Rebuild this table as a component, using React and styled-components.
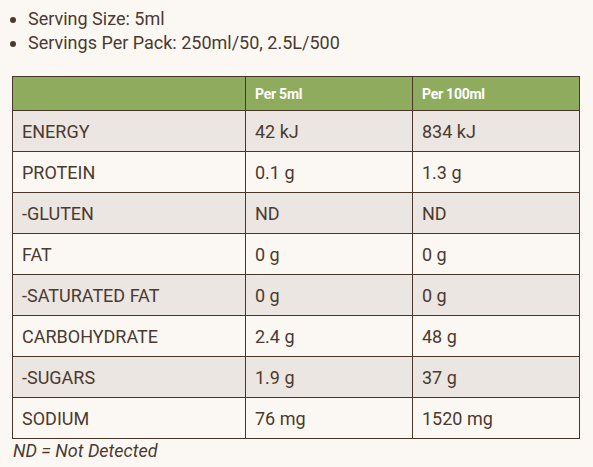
import React from "react";
import styled, { createGlobalStyle } from "styled-components";

const Global = createGlobalStyle`
  html, body { margin: 0; padding: 0; background: #fbf8f4; }
  body { font-family: Roboto, "Liberation Sans", sans-serif; color: #4b3a30; }
`;

const Page = styled.div`
  padding: 7px 14px 0 12px;
`;

const List = styled.ul`
  margin: 0;
  padding-left: 16px;
  font-size: 18px;
  line-height: 24px;
`;

const Table = styled.table`
  margin-top: 21px;
  width: 567px;
  border-collapse: collapse;
  table-layout: fixed;
`;

const Head = styled.th`
  background: #8fab5d;
  color: #ffffff;
  font-size: 14px;
  font-weight: 700;
  letter-spacing: -0.25px;
  text-align: left;
  height: 33px;
  padding: 0 9px;
  border: 1px solid #4a3628;
`;

const Row = styled.tr`
  background: ${(p) => (p.$alt ? "#ebe6e1" : "#fbf8f4")};
`;

const Cell = styled.td`
  font-size: 18px;
  height: 41px;
  padding: 0 9px;
  border: 1px solid #4a3628;
  box-sizing: border-box;
`;

const Note = styled.div`
  font-size: 18px;
  font-style: italic;
  line-height: 24px;
  padding-left: 1px;
`;

const rows = [
  ["ENERGY", "42 kJ", "834 kJ"],
  ["PROTEIN", "0.1 g", "1.3 g"],
  ["-GLUTEN", "ND", "ND"],
  ["FAT", "0 g", "0 g"],
  ["-SATURATED FAT", "0 g", "0 g"],
  ["CARBOHYDRATE", "2.4 g", "48 g"],
  ["-SUGARS", "1.9 g", "37 g"],
  ["SODIUM", "76 mg", "1520 mg"],
];

export default function App() {
  return (
    <Page>
      <Global />
      <List>
        <li>Serving Size: 5ml</li>
        <li>Servings Per Pack: 250ml/50, 2.5L/500</li>
      </List>
      <Table>
        <colgroup>
          <col style={{ width: "233px" }} />
          <col style={{ width: "167px" }} />
          <col style={{ width: "167px" }} />
        </colgroup>
        <thead>
          <tr>
            <Head></Head>
            <Head>Per 5ml</Head>
            <Head>Per 100ml</Head>
          </tr>
        </thead>
        <tbody>
          {rows.map((r, i) => (
            <Row key={r[0]} $alt={i % 2 === 0}>
              {r.map((c, j) => (
                <Cell key={j}>{c}</Cell>
              ))}
            </Row>
          ))}
        </tbody>
      </Table>
      <Note>ND = Not Detected</Note>
    </Page>
  );
}
